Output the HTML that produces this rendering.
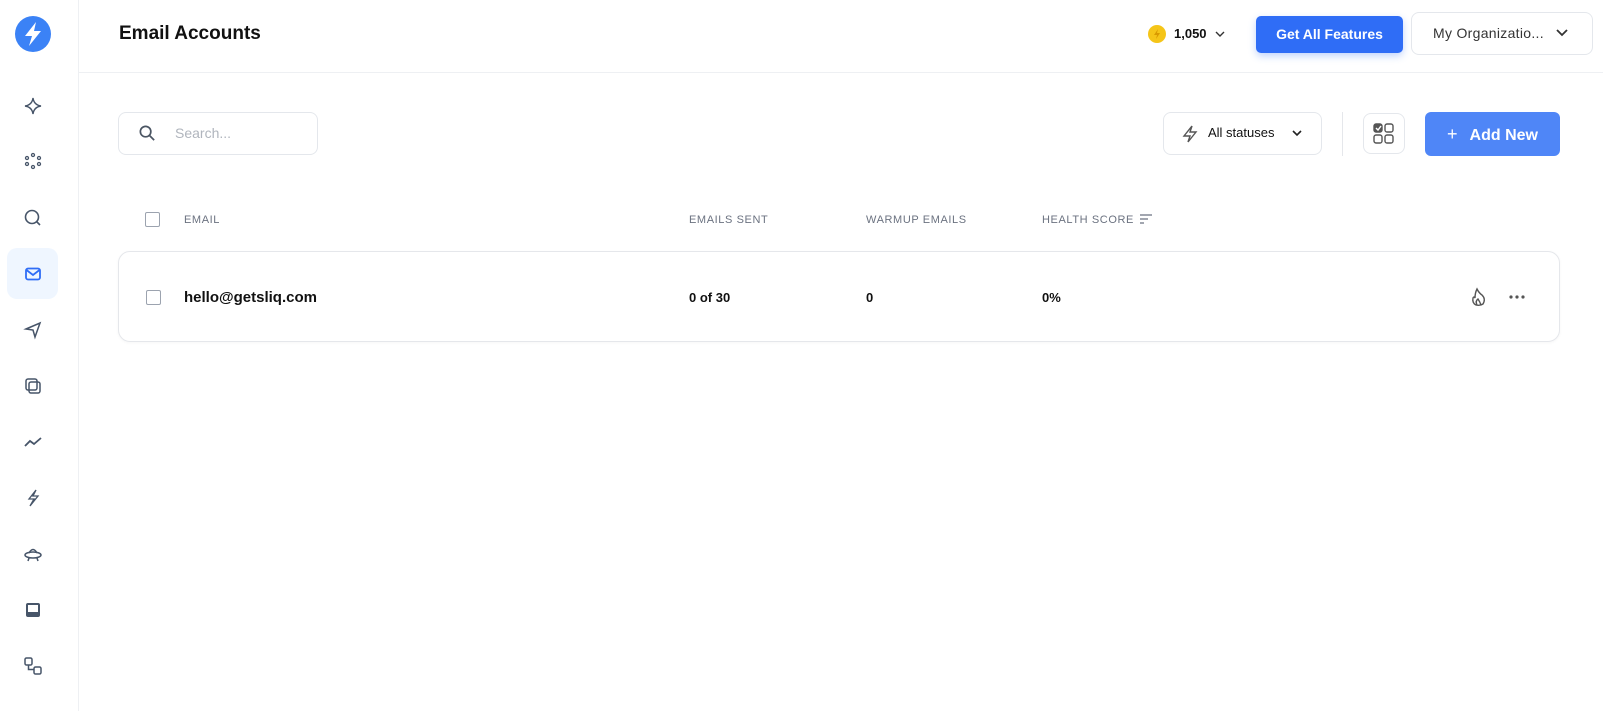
<!DOCTYPE html>
<html><head><meta charset="utf-8"><style>
*{box-sizing:border-box;margin:0;padding:0}
body{width:1603px;height:711px;background:#fff;font-family:"Liberation Sans",sans-serif;color:#111;position:relative;overflow:hidden}
.abs{position:absolute}
.side{left:0;top:0;width:79px;height:711px;border-right:1px solid #eef0f3}
.ic{position:absolute;left:23px;width:20px;height:20px}
.hdr{left:79px;top:72px;right:0;height:1px;background:#eef0f3}
.btn{border:1px solid #e4e7ec;border-radius:8px;background:#fff}
.th{font-size:11px;color:#6b7280;letter-spacing:.6px;top:214px}
.cb{width:15px;height:15px;border:1.5px solid #9ca3af;border-radius:2px}
.td{font-size:14px;font-weight:bold;top:290px}
</style></head><body>
<div class="abs side">
<svg class="abs" style="left:15px;top:16px" width="36" height="36" viewBox="0 0 36 36"><circle cx="18" cy="18" r="18" fill="#3b82f6"/><path d="M21 6 L10 20 H17 L14 30 L26 15 H19 Z" fill="#fff"/></svg>
<div class="abs" style="left:7px;top:248px;width:51px;height:51px;background:#eff6ff;border-radius:10px"></div>
<svg class="ic" style="top:96px" viewBox="0 0 20 20" fill="none" stroke="#475569" stroke-width="1.4"><path d="M10 2 Q11 9 18 10 Q11 11 10 18 Q9 11 2 10 Q9 9 10 2Z"/></svg>
<svg class="ic" style="top:151px" viewBox="0 0 20 20" fill="none" stroke="#475569" stroke-width="1.3"><circle cx="10" cy="4" r="1.5"/><circle cx="4" cy="7" r="1.5"/><circle cx="16" cy="7" r="1.5"/><circle cx="4" cy="13" r="1.5"/><circle cx="16" cy="13" r="1.5"/><circle cx="10" cy="16" r="1.5"/></svg>
<svg class="ic" style="top:208px" viewBox="0 0 20 20" fill="none" stroke="#475569" stroke-width="1.6"><circle cx="9" cy="9" r="6.5"/><path d="M14 14l3 3"/></svg>
<svg class="ic" style="top:264px" viewBox="0 0 20 20" fill="none" stroke="#2f6df6" stroke-width="1.8"><rect x="3" y="4.5" width="14" height="11" rx="2"/><path d="M3.5 6l6.5 5 6.5-5"/></svg>
<svg class="ic" style="top:320px" viewBox="0 0 20 20" fill="none" stroke="#475569" stroke-width="1.5"><path d="M3 9 L17 3 L12 17 L10 10 Z"/></svg>
<svg class="ic" style="top:376px" viewBox="0 0 20 20" fill="none" stroke="#475569" stroke-width="1.5"><rect x="3" y="3" width="11" height="11" rx="2"/><rect x="6" y="6" width="11" height="11" rx="2"/></svg>
<svg class="ic" style="top:432px" viewBox="0 0 20 20" fill="none" stroke="#475569" stroke-width="1.8"><path d="M2 14 L7 9 L11 12 L18 6"/></svg>
<svg class="ic" style="top:488px" viewBox="0 0 20 20" fill="none" stroke="#475569" stroke-width="1.3"><path d="M13 2 L6 11 H11 L7 18 L15 8 H10 Z"/></svg>
<svg class="ic" style="top:544px" viewBox="0 0 20 20" fill="none" stroke="#475569" stroke-width="1.5"><path d="M6 9 Q10 2 14 9"/><ellipse cx="10" cy="11" rx="8" ry="3"/><path d="M6 14l-1 3M14 14l1 3"/></svg>
<svg class="ic" style="top:600px" viewBox="0 0 20 20"><rect x="3" y="3" width="14" height="14" rx="2" fill="#475569"/><rect x="5" y="5" width="10" height="7" fill="#fff"/></svg>
<svg class="ic" style="top:656px" viewBox="0 0 20 20" fill="none" stroke="#475569" stroke-width="1.5"><rect x="2" y="2" width="7" height="7" rx="1.5"/><rect x="11" y="11" width="7" height="7" rx="1.5"/><path d="M5.5 9v4.5H11"/></svg>
</div>
<div class="abs" style="left:119px;top:23px;font-size:19px;font-weight:bold">Email Accounts</div>
<div class="abs hdr"></div>
<svg class="abs" style="left:1147px;top:24px" width="20" height="20" viewBox="0 0 20 20"><circle cx="10" cy="10" r="9" fill="#f5c518"/><path d="M11 5 L7 11 H10 L9 15 L13 9 H10Z" fill="#d99a00"/></svg>
<div class="abs" style="left:1174px;top:26px;font-size:13px;font-weight:bold">1,050</div>
<svg class="abs" style="left:1214px;top:29px" width="12" height="10" viewBox="0 0 12 10" fill="none" stroke="#333" stroke-width="1.4"><path d="M2 3l4 4 4-4"/></svg>
<div class="abs" style="left:1256px;top:16px;width:147px;height:37px;background:#2f6df6;border-radius:5px;color:#fff;font-size:14px;font-weight:bold;text-align:center;line-height:37px;box-shadow:0 3px 8px rgba(47,109,246,.3)">Get All Features</div>
<div class="abs btn" style="left:1411px;top:12px;width:182px;height:43px;font-size:14px;color:#333;padding:12px 0 0 21px;letter-spacing:.3px">My Organizatio...</div>
<svg class="abs" style="left:1555px;top:27px" width="14" height="12" viewBox="0 0 14 12" fill="none" stroke="#333" stroke-width="1.8"><path d="M2 3l5 5 5-5"/></svg>
<div class="abs btn" style="left:118px;top:112px;width:200px;height:43px"></div>
<svg class="abs" style="left:138px;top:124px" width="19" height="19" viewBox="0 0 20 20" fill="none" stroke="#4b5563" stroke-width="1.8"><circle cx="8" cy="8" r="5.5"/><path d="M12 12l5 5"/></svg>
<div class="abs" style="left:175px;top:125px;font-size:14px;color:#b0b5bd">Search...</div>
<div class="abs btn" style="left:1163px;top:112px;width:159px;height:43px"></div>
<svg class="abs" style="left:1181px;top:124px" width="18" height="20" viewBox="0 0 18 20" fill="none" stroke="#555" stroke-width="1.4"><path d="M11 2 L3 12 H9 L7 18 L15 8 H9 Z"/></svg>
<div class="abs" style="left:1208px;top:125px;font-size:13px">All statuses</div>
<svg class="abs" style="left:1291px;top:128px" width="12" height="10" viewBox="0 0 12 10" fill="none" stroke="#222" stroke-width="1.6"><path d="M2 3l4 4 4-4"/></svg>
<div class="abs" style="left:1342px;top:112px;width:1px;height:44px;background:#e5e7eb"></div>
<div class="abs btn" style="left:1363px;top:113px;width:42px;height:41px"></div>
<svg class="abs" style="left:1373px;top:123px" width="22" height="22" viewBox="0 0 22 22" fill="none" stroke="#555" stroke-width="1.4"><rect x="1" y="1" width="8" height="8" rx="2" fill="#555"/><path d="M3 5l2 2 3-4" stroke="#fff"/><rect x="12" y="1" width="8" height="8" rx="2"/><rect x="1" y="12" width="8" height="8" rx="2"/><rect x="12" y="12" width="8" height="8" rx="2"/></svg>
<div class="abs" style="left:1425px;top:112px;width:135px;height:44px;background:#4f86f7;border-radius:6px;color:#fff;font-size:16px;font-weight:bold;line-height:44px;padding-left:22px"><span style="font-weight:normal;font-size:18px;margin-right:12px">+</span>Add New</div>
<div class="abs cb" style="left:145px;top:212px"></div>
<div class="abs th" style="left:184px">EMAIL</div>
<div class="abs th" style="left:689px">EMAILS SENT</div>
<div class="abs th" style="left:866px">WARMUP EMAILS</div>
<div class="abs th" style="left:1042px">HEALTH SCORE</div>
<svg class="abs" style="left:1139px;top:213px" width="14" height="12" viewBox="0 0 14 12" stroke="#6b7280" stroke-width="1.3"><path d="M1 2h12M1 6h8M1 10h4"/></svg>
<div class="abs" style="left:118px;top:251px;width:1442px;height:91px;border:1px solid #e5e7eb;border-radius:12px;box-shadow:0 1px 3px rgba(0,0,0,.04)"></div>
<div class="abs cb" style="left:146px;top:290px"></div>
<div class="abs td" style="left:184px;font-size:15px;top:289px">hello@getsliq.com</div>
<div class="abs td" style="left:689px;font-size:13px;top:290px">0 of 30</div>
<div class="abs td" style="left:866px;font-size:13px;top:290px">0</div>
<div class="abs td" style="left:1042px;font-size:13px;top:290px">0%</div>
<svg class="abs" style="left:1470px;top:287px" width="18" height="20" viewBox="0 0 18 20" fill="none" stroke="#555" stroke-width="1.4"><path d="M7 2 Q9 6 12 8 Q16 12 13 17 Q10 19 6 18 Q2 16 3 11 Q4 9 5 11 Q5 6 7 2Z M7 18 Q5 14 8 12 Q10 15 11 18"/></svg>
<svg class="abs" style="left:1508px;top:294px" width="18" height="6" viewBox="0 0 18 6" fill="#555"><circle cx="3" cy="3" r="1.6"/><circle cx="9" cy="3" r="1.6"/><circle cx="15" cy="3" r="1.6"/></svg>
</body></html>
